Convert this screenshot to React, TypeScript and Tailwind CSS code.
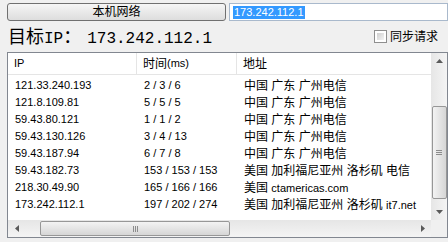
import React from 'react';

const rows = [
  { ip: '121.33.240.193', time: '2 / 3 / 6', addr: ['中国 广东 广州电信'] },
  { ip: '121.8.109.81', time: '5 / 5 / 5', addr: ['中国 广东 广州电信'] },
  { ip: '59.43.80.121', time: '1 / 1 / 2', addr: ['中国 广东 广州电信'] },
  { ip: '59.43.130.126', time: '3 / 4 / 13', addr: ['中国 广东 广州电信'] },
  { ip: '59.43.187.94', time: '6 / 7 / 8', addr: ['中国 广东 广州电信'] },
  { ip: '59.43.182.73', time: '153 / 153 / 153', addr: ['美国 加利福尼亚州 洛杉矶 电信'] },
  { ip: '218.30.49.90', time: '165 / 166 / 166', addr: ['美国 ', 'ctamericas.com'] },
  { ip: '173.242.112.1', time: '197 / 202 / 274', addr: ['美国 加利福尼亚州 洛杉矶 ', 'it7.net'] },
];

const latin = "font-['Liberation_Sans',sans-serif] text-[11px]";
const cjk = "font-['Liberation_Sans','Noto_Sans_CJK_SC',sans-serif] text-[12px]";

const Arrow = ({ dir }: { dir: 'up' | 'down' | 'left' | 'right' }) => {
  const pts = {
    up: '0,4 3.5,0 7,4',
    down: '0,0 3.5,4 7,0',
    left: '4,0 0,3.5 4,7',
    right: '0,0 4,3.5 0,7',
  }[dir];
  const vertical = dir === 'up' || dir === 'down';
  return (
    <svg width={vertical ? 7 : 4} height={vertical ? 4 : 7}>
      <polygon points={pts} fill="#5a5a5a" />
    </svg>
  );
};

export default function App() {
  return (
    <div className="w-[448px] h-[242px] bg-[#f0f0f0] overflow-hidden flex flex-col text-black">
      {/* top bar */}
      <div className="flex pt-[3px] pl-[7px] gap-[3px]">
        <button className={`w-[219px] h-[18px] rounded-[3px] border border-[#707070] bg-gradient-to-b from-[#f6f6f6] to-[#dddddd] flex items-center justify-center leading-none ${cjk}`}>
          本机网络
        </button>
        <div className="w-[219px] h-[18px] border border-[#a9b9cc] bg-white flex items-center pl-[3px]">
          <span className={`bg-[#3399ff] text-white leading-[13px] px-[1px] ${latin}`}>173.242.112.1</span>
        </div>
      </div>

      {/* target line */}
      <div className="h-[31px] flex items-center justify-between pl-[8px] pr-[10px]">
        <div className="flex items-baseline leading-none">
          <span className="font-['Noto_Sans_CJK_SC',serif] text-[18px]">目标</span>
          <span className="font-['Liberation_Mono',monospace] text-[16px]">IP</span>
          <span className="font-['Noto_Sans_CJK_SC',serif] text-[18px]">：</span>
          <span className="font-['Liberation_Mono',monospace] text-[16px] ml-[6px]">173.242.112.1</span>
        </div>
        <label className="flex items-center gap-[3px]">
          <span className="w-[13px] h-[13px] border border-[#8f8f8f] bg-white p-[2px]">
            <span className="block w-full h-full bg-gradient-to-br from-[#d0d0d0] to-[#f4f4f4]" />
          </span>
          <span className={cjk}>同步请求</span>
        </label>
      </div>

      {/* list view */}
      <div className="ml-[7px] w-[441px] h-[186px] border border-[#828790] bg-white flex flex-col">
        <div className="flex flex-1 min-h-0">
          <div className="flex-1 flex flex-col">
            <div className="h-[22px] flex border-b border-[#e5e5e5] items-center">
              <div className={`w-[129px] h-full flex items-center pl-[6px] border-r border-[#e5e5e5] ${latin}`}>IP</div>
              <div className="w-[100px] h-full flex items-center pl-[6px] border-r border-[#e5e5e5]">
                <span className={cjk}>时间</span>
                <span className={latin}>(ms)</span>
              </div>
              <div className={`flex-1 h-full flex items-center pl-[6px] ${cjk}`}>地址</div>
            </div>
            <div className="pt-[2px]">
              {rows.map((r) => (
                <div key={r.ip} className="h-[17px] flex items-center">
                  <div className={`w-[130px] pl-[7px] ${latin}`}>{r.ip}</div>
                  <div className={`w-[100px] pl-[6px] ${latin}`}>{r.time}</div>
                  <div className="flex-1 pl-[6px] whitespace-pre flex items-baseline">
                    <span className={cjk}>{r.addr[0]}</span>
                    {r.addr[1] && <span className={latin}>{r.addr[1]}</span>}
                  </div>
                </div>
              ))}
            </div>
          </div>
          {/* vertical scrollbar */}
          <div className="w-[16px] bg-gradient-to-r from-[#e6e6e6] to-[#f4f4f4] flex flex-col items-center">
            <div className="h-[16px] flex items-center justify-center">
              <Arrow dir="up" />
            </div>
            <div className="h-[37px]" />
            <div className="w-[15px] h-[93px] rounded-[2px] border border-[#979797] bg-gradient-to-r from-[#f3f3f3] to-[#d6d6d6] flex flex-col items-center justify-center gap-[1px]">
              <span className="block w-[6px] h-px bg-[#8c8c8c]" />
              <span className="block w-[6px] h-px bg-[#8c8c8c]" />
              <span className="block w-[6px] h-px bg-[#8c8c8c]" />
            </div>
            <div className="flex-1" />
            <div className="h-[16px] flex items-center justify-center">
              <Arrow dir="down" />
            </div>
          </div>
        </div>
        {/* horizontal scrollbar */}
        <div className="h-[17px] flex">
          <div className="flex-1 bg-gradient-to-b from-[#e6e6e6] to-[#f4f4f4] flex items-center">
            <div className="w-[17px] h-full flex items-center justify-center">
              <Arrow dir="left" />
            </div>
            <div className="w-[15px]" />
            <div className="w-[190px] h-[15px] rounded-[2px] border border-[#979797] bg-gradient-to-b from-[#f3f3f3] to-[#d6d6d6] flex items-center justify-center gap-[1px]">
              <span className="block w-px h-[6px] bg-[#8c8c8c]" />
              <span className="block w-px h-[6px] bg-[#8c8c8c]" />
              <span className="block w-px h-[6px] bg-[#8c8c8c]" />
            </div>
            <div className="flex-1" />
            <div className="w-[17px] h-full flex items-center justify-center">
              <Arrow dir="right" />
            </div>
          </div>
          <div className="w-[16px] bg-[#f0f0f0]" />
        </div>
      </div>
    </div>
  );
}
